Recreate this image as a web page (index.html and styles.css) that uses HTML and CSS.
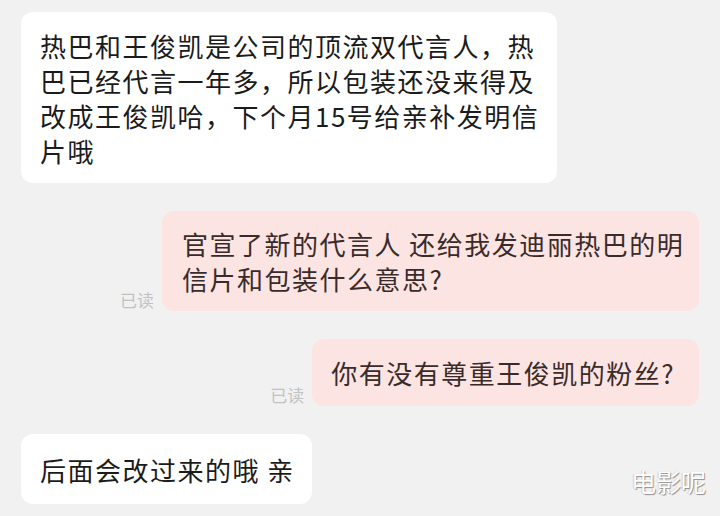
FILE: index.html
```html
<!DOCTYPE html>
<html lang="zh-CN">
  <head>
    <meta charset="UTF-8">
    <meta name="viewport" content="width=device-width, initial-scale=1.0">
    <title>聊天记录</title>
    <link rel="stylesheet" href="styles.css">
  </head>
  <body>
    <div class="chat">
      <div class="row in">
        <div class="bubble long">热巴和王俊凯是公司的顶流双代言人，热巴已经代言一年多，所以包装还没来得及改成王俊凯哈，下个月15号给亲补发明信片哦</div>
      </div>
      <div class="row out">
        <span class="read">已读</span>
        <div class="bubble pink long">官宣了新的代言人 还给我发迪丽热巴的明信片和包装什么意思?</div>
      </div>
      <div class="row out">
        <span class="read">已读</span>
        <div class="bubble pink">你有没有尊重王俊凯的粉丝?</div>
      </div>
      <div class="row in">
        <div class="bubble">后面会改过来的哦 亲</div>
      </div>
    </div>
    <div class="mark">电影呢</div>
  </body>
</html>
```

FILE: styles.css
```css
body {
  margin: 0;
  font-family: "Noto Sans CJK SC", "Noto Sans", sans-serif;
  background-color: #f1f1f1;
  color: #1b1b1b;
  width: 720px;
  height: 516px;
  overflow: hidden;
  position: relative;
}
.chat {
  padding: 12px 21px 0;
  display: flex;
  flex-direction: column;
  gap: 28px;
}
.row {
  display: flex;
  align-items: flex-end;
}
.row.out {
  justify-content: flex-end;
  gap: 8px;
}
.bubble {
  box-sizing: border-box;
  padding: 16px 24px 16px 19px;
  background: #fff;
  border-radius: 12px;
  font-size: 26px;
  letter-spacing: 1.5px;
  line-height: 35px;
}
.bubble.long {
  width: 536px;
  padding: 15.5px 10px 15.5px 19px;
}
.bubble.pink {
  background: #fbe4e2;
  color: #3a2b2b;
}
.bubble.pink.long {
  width: 537px;
  padding: 15px 8px 15px 20px;
}
.row:last-child .bubble {
  padding: 17.5px 17px 17.5px 19px;
}
.read {
  font-size: 17px;
  line-height: 20px;
  color: #c2c2c2;
  margin-bottom: 1px;
}
.mark {
  position: absolute;
  right: 14px;
  bottom: 17px;
  font-size: 25px;
  letter-spacing: 0;
  color: #fff;
  text-shadow: 1px 1px 1px rgba(0, 0, 0, 0.4), -1px 0 1px rgba(0, 0, 0, 0.12);
}
```
